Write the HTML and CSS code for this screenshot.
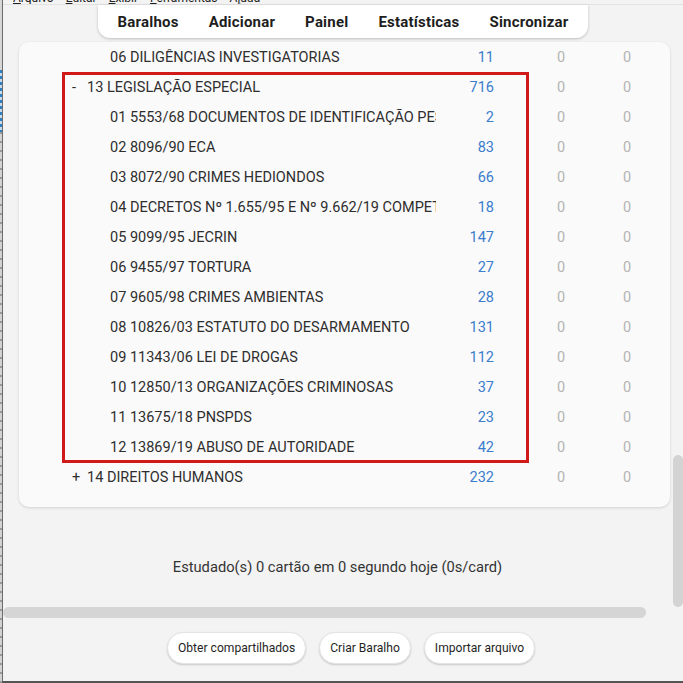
FILE: index.html
```html
<!DOCTYPE html>
<html lang="pt-BR">
<head>
<meta charset="utf-8">
<title>Anki</title>
<link rel="stylesheet" href="styles.css">
</head>
<body>
<div class="screen">
  <div class="strip">
    <div class="strip-top"></div>
    <div class="strip-blue"></div>
    <div class="strip-mid"></div>
  </div>
  <div class="window">
    <div class="menubar">
      <span class="menu"><u>A</u>rquivo</span>
      <span class="menu"><u>E</u>ditar</span>
      <span class="menu"><u>E</u>xibir</span>
      <span class="menu"><u>F</u>erramentas</span>
      <span class="menu">A<u>j</u>uda</span>
    </div>
    <div class="viewport">
      <div class="main">
        <nav class="toolbar">
          <span class="tb-item">Baralhos</span>
          <span class="tb-item">Adicionar</span>
          <span class="tb-item">Painel</span>
          <span class="tb-item">Estatísticas</span>
          <span class="tb-item">Sincronizar</span>
        </nav>
        <div class="card">
          <div class="row"><span class="name d2">06 DILIGÊNCIAS INVESTIGATORIAS</span><span class="count">11</span><span class="due first">0</span><span class="due">0</span></div>
          <div class="row"><span class="name d1"><span class="collapse">-</span>13 LEGISLAÇÃO ESPECIAL</span><span class="count">716</span><span class="due first">0</span><span class="due">0</span></div>
          <div class="row"><span class="name d2">01 5553/68 DOCUMENTOS DE IDENTIFICAÇÃO PESSOAL</span><span class="count">2</span><span class="due first">0</span><span class="due">0</span></div>
          <div class="row"><span class="name d2">02 8096/90 ECA</span><span class="count">83</span><span class="due first">0</span><span class="due">0</span></div>
          <div class="row"><span class="name d2">03 8072/90 CRIMES HEDIONDOS</span><span class="count">66</span><span class="due first">0</span><span class="due">0</span></div>
          <div class="row"><span class="name d2">04 DECRETOS Nº 1.655/95 E Nº 9.662/19 COMPETÊNCIA</span><span class="count">18</span><span class="due first">0</span><span class="due">0</span></div>
          <div class="row"><span class="name d2">05 9099/95 JECRIN</span><span class="count">147</span><span class="due first">0</span><span class="due">0</span></div>
          <div class="row"><span class="name d2">06 9455/97 TORTURA</span><span class="count">27</span><span class="due first">0</span><span class="due">0</span></div>
          <div class="row"><span class="name d2">07 9605/98 CRIMES AMBIENTAS</span><span class="count">28</span><span class="due first">0</span><span class="due">0</span></div>
          <div class="row"><span class="name d2">08 10826/03 ESTATUTO DO DESARMAMENTO</span><span class="count">131</span><span class="due first">0</span><span class="due">0</span></div>
          <div class="row"><span class="name d2">09 11343/06 LEI DE DROGAS</span><span class="count">112</span><span class="due first">0</span><span class="due">0</span></div>
          <div class="row"><span class="name d2">10 12850/13 ORGANIZAÇÕES CRIMINOSAS</span><span class="count">37</span><span class="due first">0</span><span class="due">0</span></div>
          <div class="row"><span class="name d2">11 13675/18 PNSPDS</span><span class="count">23</span><span class="due first">0</span><span class="due">0</span></div>
          <div class="row"><span class="name d2">12 13869/19 ABUSO DE AUTORIDADE</span><span class="count">42</span><span class="due first">0</span><span class="due">0</span></div>
          <div class="row"><span class="name d1"><span class="collapse">+</span>14 DIREITOS HUMANOS</span><span class="count">232</span><span class="due first">0</span><span class="due">0</span></div>
          <div class="highlight"></div>
        </div>
        <p class="stats">Estudado(s) 0 cartão em 0 segundo hoje (0s/card)</p>
      </div>
      <div class="vscroll"><div class="vthumb"></div></div>
    </div>
    <div class="hscroll"><div class="hthumb"></div></div>
    <div class="buttons">
      <button class="btn">Obter compartilhados</button>
      <button class="btn">Criar Baralho</button>
      <button class="btn">Importar arquivo</button>
    </div>
  </div>
</div>
</body>
</html>
```

FILE: styles.css
```css
* { box-sizing: border-box; }
html, body { margin: 0; padding: 0; }
body { background: #f3f3f3; }

.screen {
  width: 683px;
  height: 683px;
  display: flex;
  overflow: hidden;
  background: #f3f3f3;
  font-family: Roboto, "Liberation Sans", sans-serif;
  color: #2e2e2e;
}

.strip {
  width: 2px;
  display: flex;
  flex-direction: column;
  background: #c4c4c4;
}
.strip-top { height: 70px; background: #d6d6d6; }
.strip-blue {
  height: 62px;
  background: repeating-linear-gradient(180deg, #2f7fc4 0 3px, #c9d9e6 3px 6px);
}
.strip-mid {
  flex: 1;
  background: repeating-linear-gradient(180deg, #9a9a9a 0 2px, #d2d2d2 2px 9px);
}

.window {
  flex: 1;
  min-width: 0;
  display: flex;
  flex-direction: column;
  border-left: 1px solid #6c6c6c;
  border-bottom: 2px solid #555;
  background: #f3f3f3;
}

.menubar {
  height: 5px;
  overflow: hidden;
  display: flex;
  gap: 12px;
  padding-left: 10px;
  border-bottom: 1px solid #e2e2e2;
  background: #f3f3f3;
}
.menu {
  font-size: 12px;
  line-height: 14px;
  margin-top: -9px;
  color: #222;
}
.menu u { text-decoration-thickness: 1px; }

.viewport {
  height: 602px;
  display: flex;
}
.main {
  flex: 1;
  min-width: 0;
  display: flex;
  flex-direction: column;
}

.toolbar {
  align-self: center;
  margin-left: 11px;
  height: 33px;
  display: flex;
  align-items: center;
  gap: 30px;
  padding: 0 20px;
  background: #fff;
  border-radius: 0 0 12px 12px;
  box-shadow: 0 1px 3px rgba(0, 0, 0, 0.22);
  position: relative;
  z-index: 2;
}
.tb-item {
  font-size: 15px;
  font-weight: 700;
  color: #1e1e1e;
  letter-spacing: 0.2px;
}

.card {
  position: relative;
  margin: 4px 2px 0 16px;
  padding-bottom: 15px;
  background: #fafafa;
  border-radius: 10px;
  box-shadow: 0 1px 3px rgba(0, 0, 0, 0.14);
}
.row {
  display: grid;
  grid-template-columns: 421px 54px 100px 66px;
  height: 30px;
  align-items: center;
  font-size: 14.5px;
}
.name {
  white-space: nowrap;
  overflow: hidden;
  color: #2e2e2e;
  margin-right: 4px;
}
.name.d1 { padding-left: 53px; }
.name.d2 { padding-left: 91px; }
.collapse {
  display: inline-block;
  width: 15px;
}
.count {
  text-align: right;
  color: #3b7dcc;
}
.due {
  text-align: center;
  color: #b4b4b4;
}
.due.first { padding-left: 34px; }

.highlight {
  position: absolute;
  left: 43px;
  top: 30px;
  width: 467px;
  height: 391px;
  border: 3px solid #d01a1a;
  pointer-events: none;
}

.stats {
  margin: 50px 0 0;
  text-align: center;
  font-size: 14.7px;
  line-height: 20px;
  color: #333;
}

.vscroll {
  width: 11px;
  display: flex;
  flex-direction: column;
}
.vthumb {
  margin-top: 450px;
  height: 152px;
  width: 10px;
  margin-left: 1px;
  background: #d3d3d3;
  border-radius: 5px;
}

.hscroll {
  height: 11px;
  display: flex;
  align-items: flex-start;
}
.hthumb {
  width: 643px;
  height: 11px;
  background: #d5d5d5;
  border-radius: 6px;
}

.buttons {
  flex: 1;
  display: flex;
  align-items: flex-start;
  gap: 13px;
  padding: 14px 0 0 164px;
}
.btn {
  height: 32px;
  padding: 0 10px;
  border: 1px solid #e4e4e4;
  border-radius: 16px;
  background: #fff;
  box-shadow: 0 1px 2px rgba(0, 0, 0, 0.18);
  font-family: Roboto, "Liberation Sans", sans-serif;
  font-size: 12.1px;
  color: #1f1f1f;
}
```
